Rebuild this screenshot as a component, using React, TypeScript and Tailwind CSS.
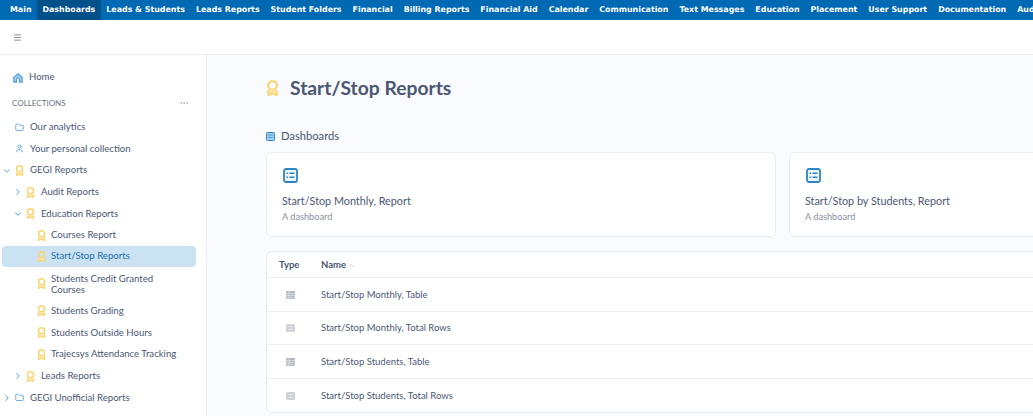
import { Folder, User, ChevronRight, ChevronDown, ChevronUp, Menu, MoreHorizontal } from "lucide-react";
import type { ReactNode } from "react";

const navItems = [
  "Main",
  "Dashboards",
  "Leads & Students",
  "Leads Reports",
  "Student Folders",
  "Financial",
  "Billing Reports",
  "Financial Aid",
  "Calendar",
  "Communication",
  "Text Messages",
  "Education",
  "Placement",
  "User Support",
  "Documentation",
  "Audit",
];

const BadgeIcon = ({ size = 9 }: { size?: number }) => (
  <svg width={size} height={size * 1.25} viewBox="0 0 12 15" fill="none" className="shrink-0">
    <circle cx="6" cy="5" r="4" stroke="#fbd46d" strokeWidth="2" />
    <path d="M2 9.5V14L6 12.4 10 14V9.5" fill="#fde7a9" stroke="#fbd46d" strokeWidth="1.6" strokeLinejoin="round" />
  </svg>
);

const HomeIcon = () => (
  <svg width="10" height="10" viewBox="0 0 10 10" className="shrink-0">
    <path d="M0.8 4.4 5 0.8l4.2 3.6V9.2H6.6V6.4a1.6 1.6 0 0 0-3.2 0v2.8H0.8Z" fill="#a8d0ec" stroke="#509ee3" strokeWidth="1.2" strokeLinejoin="round" />
  </svg>
);

const DashIcon = () => (
  <svg width="15" height="15" viewBox="0 0 15 15" fill="none" className="shrink-0">
    <rect x="1" y="1" width="13" height="13" rx="2" stroke="#2a86c8" strokeWidth="1.8" fill="#eef6fb" />
    <path d="M3.5 5.2h1.6M6.5 5.2h5M3.5 9.2h1.6M6.5 9.2h5" stroke="#2a86c8" strokeWidth="1.5" />
  </svg>
);

const TableIcon = () => (
  <svg width="9" height="8" viewBox="0 0 9 8" className="shrink-0">
    <rect width="9" height="8" rx="1" fill="#b3b9c0" />
    <path d="M0 2.5h9M0 4.5h9M0 6.4h9M3 0v8" stroke="#e8ebee" strokeWidth="0.6" />
  </svg>
);

const RowsIcon = () => (
  <svg width="9" height="8" viewBox="0 0 9 8" className="shrink-0">
    <rect width="9" height="8" rx="1.5" fill="#cfd3d8" />
    <path d="M2.5 2.5h4M2.5 5.5h4" stroke="#eef0f2" strokeWidth="0.8" />
  </svg>
);

const SideRow = ({
  indent,
  chevron,
  icon,
  label,
}: {
  indent: string;
  chevron?: "open" | "closed";
  icon: ReactNode;
  label: string;
}) => (
  <div className={`relative flex h-[21.7px] items-center gap-[6px] ${indent}`}>
    {chevron === "open" && <ChevronDown size={10} strokeWidth={2.4} className="absolute ml-[-13px] text-[#509ee3]" />}
    {chevron === "closed" && <ChevronRight size={10} strokeWidth={2.4} className="absolute ml-[-13px] text-[#509ee3]" />}
    {icon}
    <span>{label}</span>
  </div>
);

const App = () => {
  return (
    <div className="flex h-[416px] w-[1033px] flex-col overflow-hidden bg-white font-['Lato',sans-serif] text-[#4c5773]">
      <nav className="flex h-5 shrink-0 items-stretch overflow-hidden whitespace-nowrap bg-[#0069b4] pl-[4.5px] font-['DejaVu_Sans',sans-serif] text-[7.9px] font-bold text-white">
        {navItems.map((item) => (
          <div
            key={item}
            className={`flex items-center px-[5.5px] ${item === "Dashboards" ? "bg-[#00508a]" : ""}`}
          >
            {item}
          </div>
        ))}
      </nav>

      <div className="flex h-[35px] shrink-0 items-center border-b border-[#eaebee] pl-[13px]">
        <Menu size={9} strokeWidth={2} className="text-[#5f6670]" />
      </div>

      <div className="flex min-h-0 flex-1">
        <aside className="w-[207px] shrink-0 border-r border-[#eaebee] pb-2 text-[9.6px] text-[#4c5773]">
          <div className="mt-[11px] flex h-[21px] items-center gap-[6px] pl-[13px] pt-[2px]">
            <HomeIcon />
            <span>Home</span>
          </div>
          <div className="mt-[6px] flex h-[20px] items-center justify-between pl-[12px] pr-[17px] text-[8px] text-[#6b7488]">
            <span>COLLECTIONS</span>
            <MoreHorizontal size={10} className="text-[#a3a8b2]" />
          </div>
          <div className="mt-[3.4px]">
            <SideRow indent="pl-[15px]" icon={<Folder size={9} strokeWidth={2.2} className="shrink-0 text-[#509ee3]" />} label="Our analytics" />
            <SideRow indent="pl-[15px]" icon={<User size={9} strokeWidth={2.2} className="shrink-0 text-[#509ee3]" />} label="Your personal collection" />
            <SideRow indent="pl-[15px]" chevron="open" icon={<BadgeIcon />} label="GEGI Reports" />
            <SideRow indent="pl-[26px]" chevron="closed" icon={<BadgeIcon />} label="Audit Reports" />
            <SideRow indent="pl-[26px]" chevron="open" icon={<BadgeIcon />} label="Education Reports" />
            <SideRow indent="pl-[37px] !gap-[5px]" icon={<BadgeIcon />} label="Courses Report" />
            <div className="mr-[10px] mt-[-0.7px] ml-[2px] flex h-[21px] items-center gap-[5px] rounded-[4px] bg-[#cbe2f2] pl-[35px] text-[#1c6fa8]">
              <BadgeIcon />
              <span>Start/Stop Reports</span>
            </div>
            <div className="flex h-[33.4px] items-center gap-[5px] pl-[37px] leading-[11px]">
              <BadgeIcon />
              <span>
                Students Credit Granted
                <br />
                Courses
              </span>
            </div>
            <SideRow indent="pl-[37px] !gap-[5px]" icon={<BadgeIcon />} label="Students Grading" />
            <SideRow indent="pl-[37px] !gap-[5px]" icon={<BadgeIcon />} label="Students Outside Hours" />
            <SideRow indent="pl-[37px] !gap-[5px]" icon={<BadgeIcon />} label="Trajecsys Attendance Tracking" />
            <SideRow indent="pl-[26px]" chevron="closed" icon={<BadgeIcon />} label="Leads Reports" />
            <SideRow indent="pl-[15px]" chevron="closed" icon={<Folder size={9} strokeWidth={2.2} className="shrink-0 text-[#509ee3]" />} label="GEGI Unofficial Reports" />
          </div>
        </aside>

        <main className="min-w-0 flex-1 overflow-hidden bg-[#f9fbfe] pl-[59px]">
          <div className="mt-[20px] flex items-center gap-[11px]">
            <BadgeIcon size={13} />
            <h1 className="text-[19.3px] leading-[26px] font-bold text-[#4c5773]">Start/Stop Reports</h1>
          </div>

          <div className="mt-[27px] flex items-center gap-[6px] text-[11.2px] leading-[16px]">
            <svg width="9" height="9" viewBox="0 0 9 9" className="shrink-0">
              <rect x="0.5" y="0.5" width="8" height="8" rx="1" fill="#a8d0ec" stroke="#2a86c8" />
              <path d="M2 3h5M2 5.5h5" stroke="#2a86c8" strokeWidth="0.7" />
            </svg>
            <span>Dashboards</span>
          </div>

          <div className="mt-[8px] flex w-[800px] gap-[13px]">
            {["Start/Stop Monthly, Report", "Start/Stop by Students, Report"].map((title) => (
              <div key={title} className="h-[85px] w-[510px] shrink-0 rounded-[6px] border border-[#ebeef1] bg-white pt-[15px] pl-[15px]">
                <div className="pl-px">
                  <DashIcon />
                </div>
                <div className="mt-[10px] text-[10.8px] leading-[16px]">{title}</div>
                <div className="mt-[2px] text-[9.2px] leading-[12px] text-[#8a90a0]">A dashboard</div>
              </div>
            ))}
          </div>

          <div className="mt-[14px] w-[900px] rounded-[6px] border border-[#ebeef1] bg-white text-[9.5px]">
            <div className="flex h-[26px] items-center border-b border-[#ebeef1] pt-px">
              <div className="w-[54px] pl-[12px] font-bold">Type</div>
              <div className="flex items-center gap-[2px] font-bold">
                Name
                <ChevronUp size={7} className="text-[#a3a8b2]" />
              </div>
            </div>
            {[
              ["Start/Stop Monthly, Table", "table"],
              ["Start/Stop Monthly, Total Rows", "rows"],
              ["Start/Stop Students, Table", "table"],
              ["Start/Stop Students, Total Rows", "rows"],
            ].map(([name, kind], i) => (
              <div key={name} className={`flex h-[33.5px] items-center pt-px ${i < 3 ? "border-b border-[#ebeef1]" : ""}`}>
                <div className="w-[54px] pl-[19px]">{kind === "table" ? <TableIcon /> : <RowsIcon />}</div>
                <div>{name}</div>
              </div>
            ))}
          </div>
        </main>
      </div>
    </div>
  );
};

export default App;
